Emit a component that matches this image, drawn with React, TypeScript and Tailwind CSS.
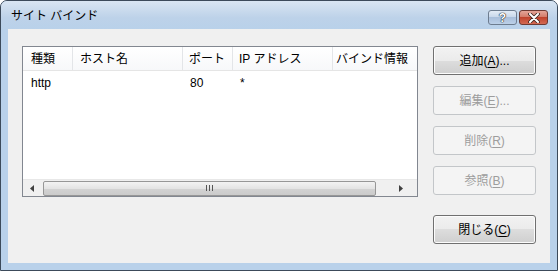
import React from 'react';

const font = { fontFamily: '"Liberation Sans", "Noto Sans CJK JP", sans-serif' };

/**
 * Win7 風のプッシュボタン
 */
const DialogButton: React.FC<{ label: string; accel: string; suffix?: string; disabled?: boolean }> = ({
  label,
  accel,
  suffix = '',
  disabled,
}) => (
  <div
    className={`h-[29px] w-[103px] rounded-[3px] border flex items-center justify-center text-[12px] leading-none ${
      disabled
        ? 'border-[#c3c6c9] bg-[#f4f4f4] text-[#9d9d9d]'
        : 'border-[#707070] bg-[linear-gradient(#f2f2f2_0%,#ebebeb_50%,#dddddd_50%,#cfcfcf_100%)] text-black shadow-[inset_0_0_0_1px_#fcfcfc]'
    }`}
  >
    <span>
      {label}(<span className="underline underline-offset-2">{accel}</span>){suffix}
    </span>
  </div>
);

export default function App() {
  return (
    <div
      className="w-[558px] h-[271px] flex flex-col bg-[#b9d1ea] border border-[#3c4a5a] rounded-t-[7px] overflow-hidden"
      style={font}
    >
      {/* タイトルバー */}
      <div className="h-[28px] flex items-start justify-between bg-[linear-gradient(#d9e5f2,#bdd2e9_60%,#b9d1ea)] pl-[10px] pr-[9px]">
        <span className="mt-[6px] text-[12px] text-black">サイト バインド</span>
        <div className="flex gap-[2px] mt-[9px]">
          <div className="w-[29px] h-[15px] rounded-[3px] border border-[#6d7c8f] bg-[linear-gradient(#e3ecf6,#c6d6ea_50%,#a9bfdb_50%,#bcd0e8)] flex items-center justify-center">
            <span className="text-[12px] font-bold leading-none text-white [text-shadow:0_0_1px_#222,0_0_1px_#222,0_0_1px_#222]">?</span>
          </div>
          <div className="w-[29px] h-[15px] rounded-[3px] border border-[#6e3a33] bg-[linear-gradient(#e4a598,#d27866_50%,#c0432d_50%,#d36a54)] flex items-center justify-center">
            <svg width="12" height="10" viewBox="0 0 12 10">
              <path d="M2 1 L10 9 M10 1 L2 9" stroke="#3a2420" strokeWidth="3.6" strokeLinecap="round" />
              <path d="M2 1 L10 9 M10 1 L2 9" stroke="#ffffff" strokeWidth="2" strokeLinecap="round" />
            </svg>
          </div>
        </div>
      </div>

      {/* クライアント領域 */}
      <div className="flex-1 mx-[7px] mb-[7px] bg-[#f0f0f0] flex pl-[14px] pt-[17px]">
        {/* リストビュー */}
        <div className="w-[396px] h-[151px] border border-[#828790] bg-white flex flex-col text-[12px] text-black">
          <div className="h-[24px] flex bg-[linear-gradient(#ffffff,#f7f8fa)] border-b border-[#e5e5e5]">
            <div className="w-[50px] pl-[8px] border-r border-[#e3e5e8] flex items-center">種類</div>
            <div className="w-[110px] pl-[7px] border-r border-[#e3e5e8] flex items-center">ホスト名</div>
            <div className="w-[50px] pl-[6px] border-r border-[#e3e5e8] flex items-center">ポート</div>
            <div className="w-[100px] pl-[6px] border-r border-[#e3e5e8] flex items-center">IP アドレス</div>
            <div className="flex-1 pl-[3px] flex items-center overflow-hidden whitespace-nowrap">バインド情報</div>
          </div>
          <div className="h-[17px] flex items-center mt-[3px]">
            <div className="w-[50px] pl-[8px]">http</div>
            <div className="w-[110px]" />
            <div className="w-[50px] pl-[7px]">80</div>
            <div className="w-[100px] pl-[7px]">*</div>
          </div>
          <div className="flex-1" />
          {/* 横スクロールバー */}
          <div className="h-[17px] flex items-center bg-[#f0f0f0] border-t border-[#e8e8e8]">
            <div className="w-[17px] h-full flex items-center justify-center">
              <svg width="4" height="7" viewBox="0 0 4 7">
                <path d="M4 0 L0 3.5 L4 7 Z" fill="#404040" />
              </svg>
            </div>
            <div className="ml-[3px] w-[333px] h-[15px] rounded-[2px] border border-[#979797] bg-[linear-gradient(#f3f3f3,#e4e4e4_50%,#d3d3d3_50%,#cbcbcb)] flex items-center justify-center">
              <div className="flex gap-[2px]">
                <div className="w-[1px] h-[6px] bg-[#555]" />
                <div className="w-[1px] h-[6px] bg-[#555]" />
                <div className="w-[1px] h-[6px] bg-[#555]" />
              </div>
            </div>
            <div className="flex-1 h-full flex items-center justify-center pl-[8px]">
              <svg width="4" height="7" viewBox="0 0 4 7">
                <path d="M0 0 L4 3.5 L0 7 Z" fill="#404040" />
              </svg>
            </div>
          </div>
        </div>

        {/* ボタン列 */}
        <div className="ml-[15px] flex flex-col">
          <DialogButton label="追加" accel="A" suffix="..." />
          <div className="mt-[11px]">
            <DialogButton label="編集" accel="E" suffix="..." disabled />
          </div>
          <div className="mt-[11px]">
            <DialogButton label="削除" accel="R" disabled />
          </div>
          <div className="mt-[11px]">
            <DialogButton label="参照" accel="B" disabled />
          </div>
          <div className="mt-[20px]">
            <DialogButton label="閉じる" accel="C" />
          </div>
        </div>
      </div>
    </div>
  );
}
